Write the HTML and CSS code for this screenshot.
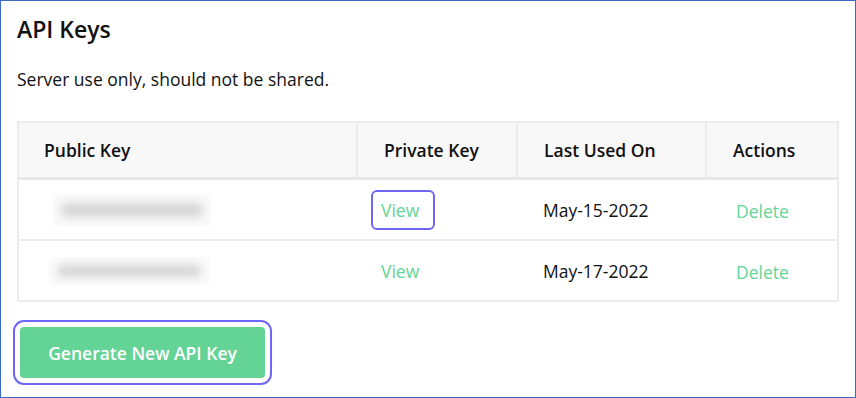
FILE: index.html
```html
<!DOCTYPE html>
<html>
<head>
<meta charset="utf-8">
<link rel="stylesheet" href="styles.css">
</head>
<body>
<div class="frame">
  <h1 class="title">API Keys</h1>
  <p class="subtitle">Server use only, should not be shared.</p>
  <table class="keys">
    <colgroup>
      <col class="c1"><col class="c2"><col class="c3"><col class="c4">
    </colgroup>
    <thead>
      <tr>
        <th class="pk">Public Key</th>
        <th>Private Key</th>
        <th>Last Used On</th>
        <th>Actions</th>
      </tr>
    </thead>
    <tbody>
      <tr>
        <td class="pk"><span class="masked m1"><span class="blob"></span></span></td>
        <td><a class="view focused">View</a></td>
        <td class="date">May-15-2022</td>
        <td><a class="del">Delete</a></td>
      </tr>
      <tr>
        <td class="pk"><span class="masked m2"><span class="blob"></span></span></td>
        <td><a class="view">View</a></td>
        <td class="date">May-17-2022</td>
        <td><a class="del">Delete</a></td>
      </tr>
    </tbody>
  </table>
  <div class="actions">
    <button class="generate">Generate New API Key</button>
  </div>
</div>
</body>
</html>
```
FILE: styles.css
```css
html, body {
  margin: 0;
  padding: 0;
  background: #ffffff;
}
.frame {
  width: 856px;
  height: 398px;
  box-sizing: border-box;
  border: 1px solid #3b6bc6;
  padding: 0 16px;
  font-family: "Open Sans", "Noto Sans", sans-serif;
  color: #111111;
  display: flex;
  flex-direction: column;
}
.title {
  margin: 13px 0 0 0;
  font-size: 23px;
  line-height: 30px;
  font-weight: 600;
  color: #111;
}
.subtitle {
  margin: 23px 0 0 0;
  font-size: 17.5px;
  line-height: 24px;
  color: #111;
}
.keys {
  margin-top: 30px;
  width: 820px;
  border-collapse: collapse;
  table-layout: fixed;
  border: 2px solid #ececec;
}
.c1 { width: 339px; }
.c2 { width: 160px; }
.c3 { width: 189px; }
.c4 { width: 132px; }
.keys th {
  background: #f8f8f8;
  height: 54px;
  padding: 0 0 0 26px;
  text-align: left;
  font-size: 17.5px;
  font-weight: 600;
  color: #111;
  border-right: 2px solid #ececec;
  border-bottom: 3px solid #e8e8e8;
}
.keys th:last-child { border-right: none; }
.keys th.pk { padding-left: 25px; }
.keys td {
  height: 59px;
  padding: 0 0 0 26px;
  font-size: 17.5px;
  border-bottom: 2px solid #ececec;
}
.keys td:nth-child(2) { padding-left: 14px; }
.keys td:nth-child(4) { padding-left: 30px; }
.keys td.pk { padding-left: 34px; }
.masked {
  display: inline-block;
  width: 158px;
  height: 32px;
  background: #fafafa;
  position: relative;
  overflow: hidden;
  vertical-align: middle;
}
.m2 { width: 160px; height: 28px; margin-left: -4px; }
.blob {
  position: absolute;
  left: 8px;
  right: 8px;
  top: 9px;
  bottom: 9px;
  background: #d5d5d5;
  border-radius: 6px;
  filter: blur(4px);
}
.m2 .blob { top: 8px; bottom: 8px; }
.view {
  display: inline-block;
  box-sizing: border-box;
  height: 40px;
  line-height: 36px;
  padding: 0 8px;
  border: 2px solid transparent;
  border-radius: 6px;
  color: #63d596;
  font-size: 17.5px;
  vertical-align: middle;
}
.view.focused { border-color: #6f66f6; width: 64px; }
.date { color: #111; }
.del {
  color: #63d596;
  font-size: 17.5px;
  position: relative;
  top: 1px;
}
.actions {
  margin-top: 25px;
  padding-left: 3px;
}
.generate {
  width: 245px;
  height: 51px;
  border: none;
  border-radius: 4px;
  background: #63d396;
  color: #ffffff;
  font-family: "Open Sans", "Noto Sans", sans-serif;
  font-size: 17.5px;
  font-weight: 600;
  outline: 2px solid #6f66f6;
  outline-offset: 5px;
}
```
